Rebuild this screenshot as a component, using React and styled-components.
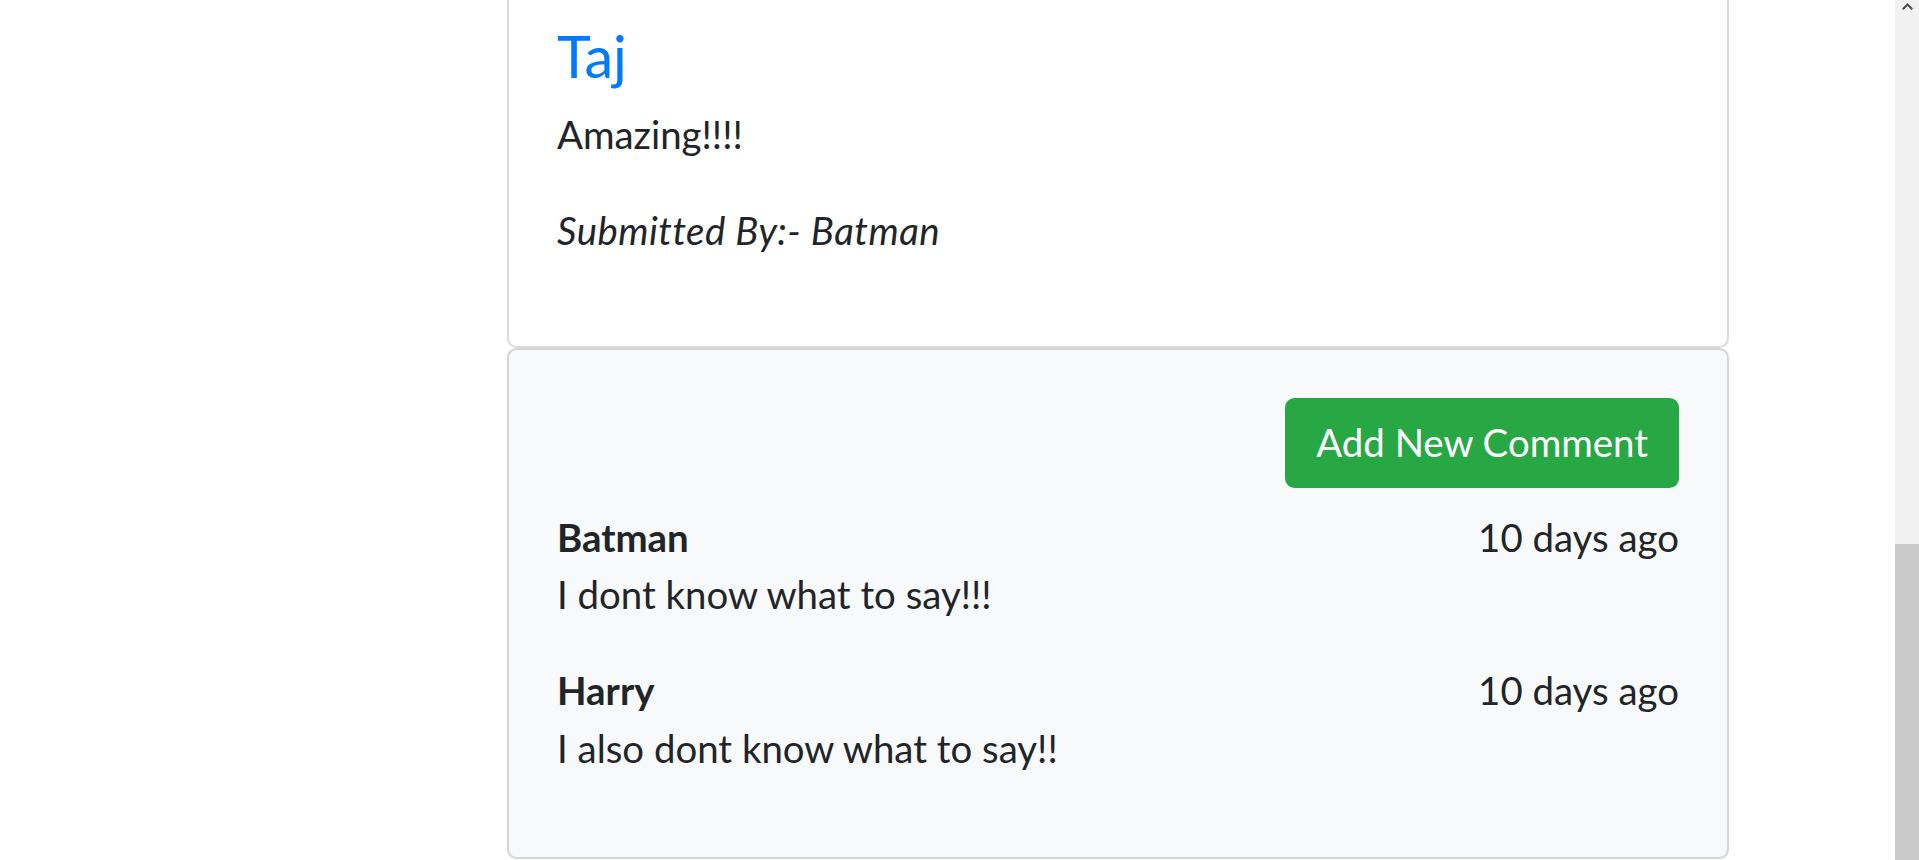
import React from 'react';
import styled, { createGlobalStyle } from 'styled-components';

const GlobalStyle = createGlobalStyle`
  html, body {
    margin: 0;
    padding: 0;
    background: #fff;
  }

  body {
    font-family: Lato, "Liberation Sans", sans-serif;
    font-size: 38.4px;
    line-height: 57.6px;
    color: #212529;
    overflow: hidden;
  }

  * {
    box-sizing: border-box;
  }
`;

const Page = styled.div`
  display: flex;
  width: 1919px;
  height: 860px;
  overflow: hidden;
`;

const Viewport = styled.main`
  flex: 1;
  height: 860px;
  overflow: hidden;
  background: #fff;
`;

// content scrolled down a little: top of the first card sits above the fold
const Column = styled.div`
  width: 1222px;
  margin: -29px 0 0 507px;
`;

const Card = styled.div`
  background: ${({ light }) => (light ? '#f8f9fa' : '#fff')};
  border: 2px solid rgba(0, 0, 0, 0.14);
  border-radius: 9.6px;
`;

const CardBody = styled.div`
  padding: 48px 48px ${({ bottom }) => bottom || 48}px;
`;

const Title = styled.h4`
  margin: 0 0 16px;
  font-size: 57.6px;
  line-height: 69px;
  font-weight: 400;
  color: #007bff;
`;

const Text = styled.p`
  margin: 0 0 ${({ last }) => (last ? 0 : 38.4)}px;
  font-style: ${({ italic }) => (italic ? 'italic' : 'normal')};
  letter-spacing: ${({ italic }) => (italic ? '0.5px' : 'normal')};
`;

const Actions = styled.div`
  display: flex;
  justify-content: flex-end;
  margin-bottom: 21px;
`;

const Button = styled.button`
  font-family: inherit;
  font-size: 38.4px;
  line-height: 57.6px;
  padding: 14px 29px;
  color: #fff;
  background: #28a745;
  border: 2px solid #28a745;
  border-radius: 9.6px;
  cursor: pointer;
`;

const CommentList = styled.div`
  display: flex;
  flex-direction: column;
  gap: 38.4px;
`;

const CommentHead = styled.div`
  display: flex;
  justify-content: space-between;
`;

const Author = styled.strong`
  font-weight: 700;
`;

const Scrollbar = styled.div`
  width: 24px;
  height: 860px;
  display: flex;
  flex-direction: column;
  background: #f1f1f1;
`;

const ArrowButton = styled.div`
  height: 17px;
  display: flex;
  align-items: flex-start;
  justify-content: center;
  padding-top: 3px;
`;

const Track = styled.div`
  flex: 1;
  display: flex;
  flex-direction: column;
  justify-content: flex-end;
`;

const Thumb = styled.div`
  height: 316px;
  background: #c9c9c9;
`;

const comments = [
  { author: 'Batman', when: '10 days ago', text: 'I dont know what to say!!!' },
  { author: 'Harry', when: '10 days ago', text: 'I also dont know what to say!!' },
];

const App = () => (
  <>
    <GlobalStyle />
    <Page>
      <Viewport>
        <Column>
          <Card>
            <CardBody>
              <Title>Taj</Title>
              <Text>Amazing!!!!</Text>
              <Text italic>Submitted By:- Batman</Text>
            </CardBody>
          </Card>
          <Card light>
            <CardBody bottom={80}>
              <Actions>
                <Button>Add New Comment</Button>
              </Actions>
              <CommentList>
                {comments.map((c) => (
                  <div key={c.author}>
                    <CommentHead>
                      <Author>{c.author}</Author>
                      <span>{c.when}</span>
                    </CommentHead>
                    <Text last>{c.text}</Text>
                  </div>
                ))}
              </CommentList>
            </CardBody>
          </Card>
        </Column>
      </Viewport>
      <Scrollbar>
        <ArrowButton>
          <svg width="11" height="7" viewBox="0 0 11 7">
            <path d="M0 5.5 L5.5 0 L11 5.5 L9.5 7 L5.5 3 L1.5 7 Z" fill="#505050" />
          </svg>
        </ArrowButton>
        <Track>
          <Thumb />
        </Track>
      </Scrollbar>
    </Page>
  </>
);

export default App;
